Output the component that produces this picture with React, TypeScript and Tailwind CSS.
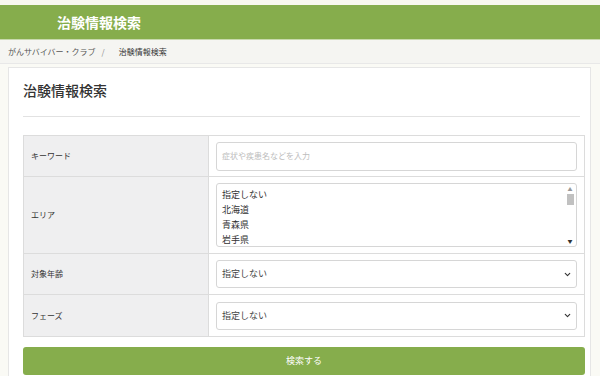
import { ChevronDown } from 'lucide-react';

const font = { fontFamily: '"Noto Sans CJK JP", "Noto Sans", sans-serif' };

function Row({ label, children, tall }: { label: string; children: React.ReactNode; tall?: boolean }) {
  return (
    <div className={`flex border-b border-[#dcdcdc] last:border-b-0 ${tall ? 'h-[77px]' : 'h-[41px]'}`}>
      <div className="w-[185px] shrink-0 bg-[#efeff0] border-r border-[#dcdcdc] flex items-center pl-[7px] text-[8px] text-[#333]">
        {label}
      </div>
      <div className="flex-1 flex items-center px-[7px]">{children}</div>
    </div>
  );
}

function SelectBox() {
  return (
    <div className="w-full h-[28px] rounded-[3px] border border-[#d6d6d6] bg-white flex items-center justify-between pl-[5px] pr-[4px] text-[9px] text-[#444]">
      <span>指定しない</span>
      <ChevronDown className="w-[9px] h-[9px] text-[#333]" strokeWidth={3} />
    </div>
  );
}

export default function App() {
  const prefs = ['指定しない', '北海道', '青森県', '岩手県', '宮城県'];
  return (
    <div className="w-[600px] h-[376px] overflow-hidden bg-[#fafaf5]" style={font}>
      <div className="h-[5px] bg-[#f8f8ee]" />
      <div className="h-[35px] bg-[#86ad4c] flex items-center pl-[57px] border-b border-[#c8d9ad]">
        <span className="text-white font-bold text-[14px]">治験情報検索</span>
      </div>
      <div className="h-[24px] bg-[#f5f5f2] flex items-center pl-[8px] text-[8px] text-[#555] border-b border-[#e8e8e8]">
        <span>がんサバイバー・クラブ</span>
        <span className="ml-[6px] text-[#888]">/</span>
        <span className="ml-[14px] text-[#333]">治験情報検索</span>
      </div>
      <div className="mt-[3px] ml-[8px] w-[583px] h-[400px] bg-white border border-[#e6e6e6] pl-[14px] pr-[5px]">
        <div className="pt-[11px] pb-[15px] mr-[5px] border-b border-[#e2e2e2] text-[14px] text-[#333] font-medium leading-[22px]">
          治験情報検索
        </div>
        <div className="mt-[18px] border border-[#dcdcdc]">
          <Row label="キーワード">
            <div className="w-full h-[29px] rounded-[3px] border border-[#d6d6d6] bg-white flex items-center pl-[5px] text-[8px] text-[#bdbdbd]">
              症状や疾患名などを入力
            </div>
          </Row>
          <Row label="エリア" tall>
            <div className="w-full h-[64px] rounded-[3px] border border-[#d6d6d6] bg-white flex overflow-hidden">
              <div className="flex-1 pl-[5px] pt-[3px] text-[9px] text-[#333] leading-[15px]">
                {prefs.map((p) => (
                  <div key={p}>{p}</div>
                ))}
              </div>
              <div className="w-[10px] flex flex-col items-center py-[2px] mr-[1px]">
                <span className="text-[5px] text-[#999] leading-[6px]">▲</span>
                <div className="w-[7px] h-[11px] bg-[#c1c1c1] mt-[2px]" />
                <div className="flex-1" />
                <span className="text-[5px] text-[#333] leading-[6px]">▼</span>
              </div>
            </div>
          </Row>
          <Row label="対象年齢">
            <SelectBox />
          </Row>
          <Row label="フェーズ">
            <SelectBox />
          </Row>
        </div>
        <div className="mt-[10px] h-[28px] rounded-[3px] bg-[#86ad4c] flex items-center justify-center text-white text-[9px]">
          検索する
        </div>
      </div>
    </div>
  );
}
